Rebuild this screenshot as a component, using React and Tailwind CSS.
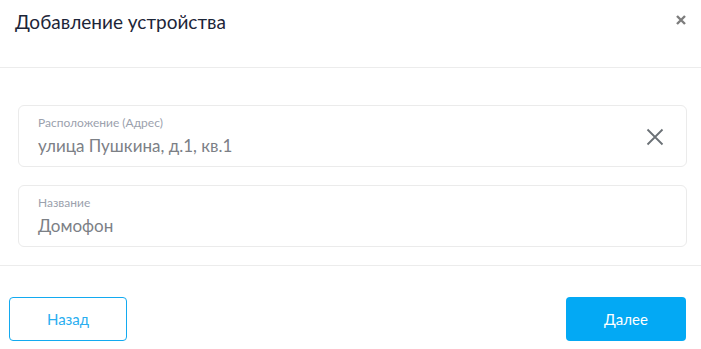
import React from "react";

function Field({ label, value, clearable }) {
  return (
    <div className="flex h-[62px] items-center rounded-md border border-[#ebebeb] pl-[19px] pr-[22px]">
      <div className="flex flex-1 flex-col">
        <span className="text-[12px] leading-[14px] text-[#9ba1ad]">{label}</span>
        <span className="mt-[6px] text-[17px] leading-[20px] text-[#7c8086]">{value}</span>
      </div>
      {clearable && (
        <svg width="18" height="18" viewBox="0 0 18 18" className="mt-[2px]">
          <path d="M1.5 1.5l15 15M16.5 1.5l-15 15" stroke="#6b7176" strokeWidth="1.8" fill="none" />
        </svg>
      )}
    </div>
  );
}

export default function App() {
  return (
    <div className="w-[701px] h-[349px] overflow-hidden bg-white font-['Lato','Noto_Sans',sans-serif]">
      <div className="flex h-[68px] items-start justify-between border-b border-[#ececec] pl-[15px] pr-[15px] pt-[10px]">
        <h1 className="text-[19px] leading-[24px] text-[#1c2538]">Добавление устройства</h1>
        <svg width="10" height="10" viewBox="0 0 10 10" className="mt-[5px]">
          <path d="M1 1l8 8M9 1l-8 8" stroke="#7d7d7d" strokeWidth="2.4" fill="none" />
        </svg>
      </div>
      <div className="flex flex-col gap-[18px] border-b border-[#ececec] pl-[18px] pr-[14px] pb-[18px] pt-[37px]">
        <Field label="Расположение (Адрес)" value="улица Пушкина, д.1, кв.1" clearable />
        <Field label="Название" value="Домофон" />
      </div>
      <div className="flex justify-between pl-[9px] pr-[15px] pt-[31px]">
        <button className="h-[44px] w-[118px] rounded-[4px] border border-[#13aaf0] text-[15px] text-[#29aef0]">
          Назад
        </button>
        <button className="h-[44px] w-[120px] rounded-[4px] bg-[#03a9f4] text-[15px] text-white">
          Далее
        </button>
      </div>
    </div>
  );
}
